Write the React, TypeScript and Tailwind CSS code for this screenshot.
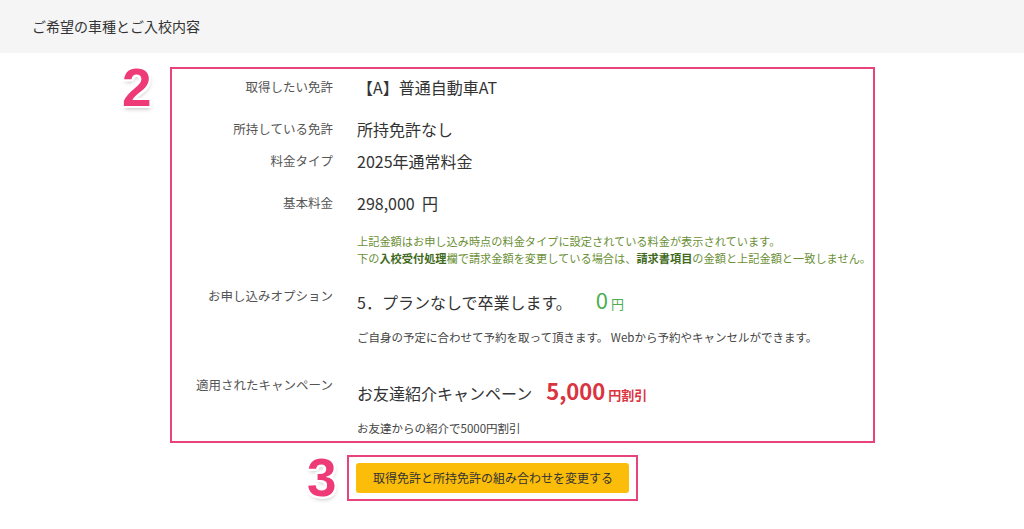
import React from "react";

const jp = '"Noto Sans CJK JP", "Noto Sans", sans-serif';

const Badge = ({ n }: { n: string }) => (
    <span
        className="font-black text-[53px] leading-none text-[#ee3a76] [text-shadow:2px_0_0_#fff,-2px_0_0_#fff,0_2px_0_#fff,0_-2px_0_#fff,2px_2px_0_#fff,-2px_-2px_0_#fff,2px_-2px_0_#fff,-2px_2px_0_#fff,1px_3px_4px_rgba(0,0,0,0.25)]"
        style={{ fontFamily: '"Liberation Sans", Arial, sans-serif' }}
    >
        {n}
    </span>
);

const Label = ({ children, className = "" }: { children: React.ReactNode; className?: string }) => (
    <div className={`w-[161px] shrink-0 text-right text-[12.5px] text-[#555] ${className}`}>{children}</div>
);

const App = () => {
    return (
        <div className="min-h-[529px] bg-white text-[#333]" style={{ fontFamily: jp }}>
            {/* page header */}
            <header className="h-[53px] bg-[#f5f5f5] flex items-center pl-8 text-[14px] text-[#333]">
                ご希望の車種とご入校内容
            </header>

            {/* summary box */}
            <div className="relative ml-[170px] mt-[14px] w-[705px] border-2 border-[#e8437c] pb-[4.5px]">
                <div className="absolute -left-[50px] -top-[8px]">
                    <Badge n="2" />
                </div>

                <div className="flex items-center gap-6 h-9">
                    <Label>取得したい免許</Label>
                    <div className="text-[16px]">【A】普通自動車AT</div>
                </div>
                <div className="flex items-center gap-6 h-8 mt-2">
                    <Label>所持している免許</Label>
                    <div className="text-[16px]">所持免許なし</div>
                </div>
                <div className="flex items-center gap-6 h-8">
                    <Label>料金タイプ</Label>
                    <div className="text-[16px]">2025年通常料金</div>
                </div>
                <div className="flex items-center gap-6 h-8 mt-2.5">
                    <Label>基本料金</Label>
                    <div className="text-[16px]">298,000&nbsp;&nbsp;円</div>
                </div>

                <div className="pl-[185px] mt-[13.5px] text-[11.2px] leading-[17px] text-[#6a8f35] whitespace-nowrap">
                    <p>上記金額はお申し込み時点の料金タイプに設定されている料金が表示されています。</p>
                    <p>
                        下の<b className="text-[#3f6a1c]">入校受付処理</b>欄で請求金額を変更している場合は、<b className="text-[#3f6a1c]">請求書項目</b>の金額と上記金額と一致しません。
                    </p>
                </div>

                <div className="flex items-start gap-6 mt-[17.5px]">
                    <Label className="leading-6">お申し込みオプション</Label>
                    <div className="leading-[36px] text-[16px]">
                        5．プランなしで卒業します。
                        <span className="ml-[24px] text-[22px] leading-none text-[#4cae4f]">0</span>
                        <span className="ml-[3px] text-[13px] leading-none text-[#4cae4f]">円</span>
                    </div>
                </div>
                <p className="pl-[185px] mt-[8.5px] text-[11.5px] leading-[17px] text-[#444]">
                    ご自身の予定に合わせて予約を取って頂きます。 Webから予約やキャンセルができます。
                </p>

                <div className="flex items-start gap-6 mt-[27.5px]">
                    <Label className="leading-6">適用されたキャンペーン</Label>
                    <div className="leading-[40px] text-[16px]">
                        お友達紹介キャンペーン
                        <span className="ml-[14px] text-[22px] leading-none font-bold text-[#d9343f]">5,000</span>
                        <span className="ml-[3px] text-[13px] leading-none font-bold text-[#d9343f]">円割引</span>
                    </div>
                </div>
                <p className="pl-[185px] mt-[6.5px] text-[11.5px] leading-[17px] text-[#444]">
                    お友達からの紹介で5000円割引
                </p>
            </div>

            {/* change button */}
            <div className="ml-[307px] mt-2 flex items-center gap-[11px]">
                <Badge n="3" />
                <div className="border-2 border-[#e8437c] px-[7px] py-[6px]">
                    <button className="w-[273px] h-[30px] rounded-[3px] bg-[#fbbd0a] text-[12px] text-[#333] cursor-pointer">
                        取得免許と所持免許の組み合わせを変更する
                    </button>
                </div>
            </div>
        </div>
    );
};

export default App;
